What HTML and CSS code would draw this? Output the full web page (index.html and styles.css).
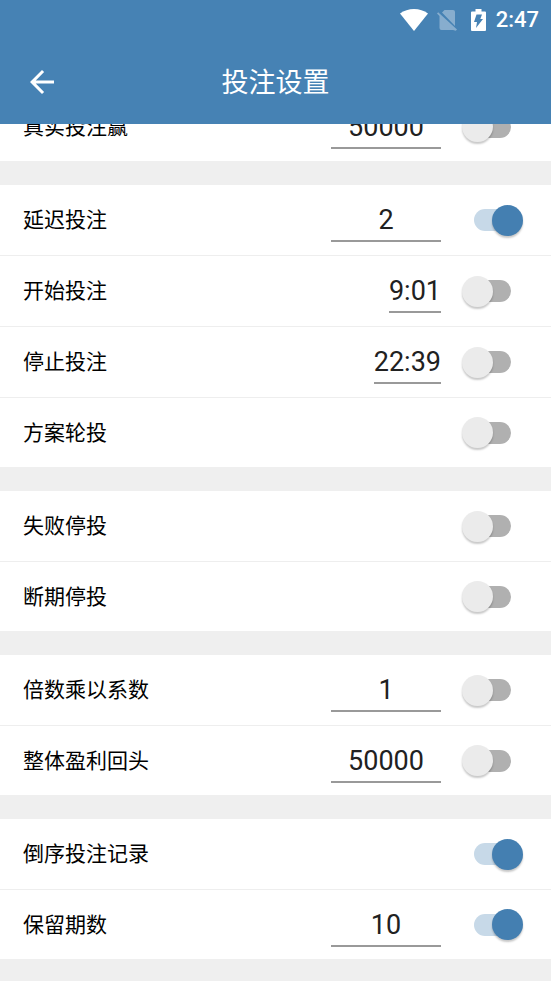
FILE: index.html
```html
<!DOCTYPE html>
<html lang="zh-CN">
<head>
<meta charset="utf-8">
<meta name="viewport" content="width=device-width, initial-scale=1">
<title>投注设置</title>
<link rel="stylesheet" href="styles.css">
</head>
<body>
<header class="header">
  <div class="status">
    <svg class="wifi" viewBox="0 0 28 22" aria-hidden="true"><path d="M14 22 0 4.6C4 1.6 8.800 0 14 0s10 1.600 14 4.600z" fill="#fff"/></svg>
    <svg class="sim" viewBox="0 0 20 22" aria-hidden="true"><path d="M7.500 1H16q2 0 2 2v14L5 3.500zM2.500 4.500 1.200 3.200 0 4.400 2.500 7v12q0 2 2 2H16l2.800.8 1.200-1.200z" fill="#fff"/></svg>
    <svg class="battery" viewBox="0 0 15 22" aria-hidden="true"><path fill="#fff" fill-rule="evenodd" d="M4.500 0h6v2.500H14q1 0 1 1V21q0 1-1 1H1q-1 0-1-1V3.500q0-1 1-1h3.500zM5.500 5.500h5.500L9.300 10h2.700L5 19l1-6H3z"/></svg>
    <span class="clock">2:47</span>
  </div>
  <div class="toolbar">
    <button class="back" type="button" aria-label="返回">
      <svg viewBox="0 0 24 24" aria-hidden="true"><path fill="#fff" d="M20 11H7.830l5.590-5.590L12 4l-8 8 8 8 1.410-1.410L7.830 13H20z"/></svg>
    </button>
    <h1 class="title">投注设置</h1>
  </div>
</header>
<main class="settings">
  <section class="group">
    <div class="row"><label class="label" for="win">真实投注赢</label><input class="field" type="text" value="50000" aria-label="真实投注赢数值"><input class="switch" type="checkbox" id="win"></div>
  </section>
  <section class="group">
    <div class="row"><label class="label" for="delay">延迟投注</label><input class="field" type="text" value="2" aria-label="延迟投注数值"><input class="switch" type="checkbox" id="delay" checked></div>
    <div class="row"><label class="label" for="start">开始投注</label><button class="field time" type="button">9:01</button><input class="switch" type="checkbox" id="start"></div>
    <div class="row"><label class="label" for="stop">停止投注</label><button class="field time" type="button">22:39</button><input class="switch" type="checkbox" id="stop"></div>
    <div class="row"><label class="label" for="rotate">方案轮投</label><input class="switch" type="checkbox" id="rotate"></div>
  </section>
  <section class="group">
    <div class="row"><label class="label" for="fail">失败停投</label><input class="switch" type="checkbox" id="fail"></div>
    <div class="row"><label class="label" for="break">断期停投</label><input class="switch" type="checkbox" id="break"></div>
  </section>
  <section class="group">
    <div class="row"><label class="label" for="factor">倍数乘以系数</label><input class="field" type="text" value="1" aria-label="系数"><input class="switch" type="checkbox" id="factor"></div>
    <div class="row"><label class="label" for="profit">整体盈利回头</label><input class="field" type="text" value="50000" aria-label="整体盈利数值"><input class="switch" type="checkbox" id="profit"></div>
  </section>
  <section class="group">
    <div class="row"><label class="label" for="reverse">倒序投注记录</label><input class="switch" type="checkbox" id="reverse" checked></div>
    <div class="row"><label class="label" for="keep">保留期数</label><input class="field" type="text" value="10" aria-label="期数"><input class="switch" type="checkbox" id="keep" checked></div>
  </section>
</main>
</body>
</html>
```
FILE: styles.css
```css
* {
  box-sizing: border-box;
}

body {
  margin: 0;
  background: #efefef;
  color: #000;
  font-family: Roboto, "Noto Sans CJK SC", sans-serif;
}

.header {
  position: sticky;
  top: 0;
  z-index: 1;
  background: #4682b4;
  color: #fff;
}

.status {
  display: flex;
  justify-content: flex-end;
  align-items: center;
  height: 39px;
  padding-right: 12px;
}

.status svg {
  height: 22px;
}

.wifi {
  width: 28px;
  margin-right: 9px;
}

.sim {
  width: 20px;
  margin-right: 14px;
  opacity: 0.35;
}

.battery {
  width: 15px;
  margin-right: 10px;
}

.clock {
  font-size: 22px;
  font-weight: 500;
  line-height: 24px;
}

.toolbar {
  display: grid;
  grid-template-columns: 1fr auto 1fr;
  align-items: center;
  height: 85px;
  padding: 0 24px;
}

.back {
  width: 36px;
  height: 36px;
  padding: 0;
  border: 0;
  background: none;
}

.back svg {
  display: block;
}

.title {
  margin: 0;
  padding-top: 3px;
  font-size: 27px;
  font-weight: 400;
  line-height: 40px;
}

/* The list is scrolled partly under the header. */
.settings {
  display: flex;
  flex-direction: column;
  gap: 24px;
  margin-top: -32px;
  padding-bottom: 22px;
}

.group {
  background: #fff;
}

.row {
  display: flex;
  align-items: center;
  height: 71px;
  padding: 0 28px 0 23px;
  border-bottom: 1px solid #eee;
}

.row:last-child {
  height: 69px;
  border-bottom: 0;
}

.label {
  flex: 1;
  font-size: 21px;
  line-height: 32px;
}

.field {
  width: 110px;
  height: 44px;
  margin: 0 21px 0 0;
  padding: 2px 0 0;
  border: 0;
  border-bottom: 2px solid #999;
  border-radius: 0;
  background: none;
  color: #212121;
  font-family: inherit;
  font-size: 27px;
  text-align: center;
}

.time {
  width: auto;
}

.switch {
  appearance: none;
  display: grid;
  align-items: center;
  width: 61px;
  height: 31px;
  margin: 0;
}

.switch::before,
.switch::after {
  content: "";
  grid-area: 1 / 1;
}

.switch::before {
  justify-self: center;
  width: 37px;
  height: 22px;
  border-radius: 11px;
  background: #b0b0b0;
}

.switch::after {
  width: 31px;
  height: 31px;
  border-radius: 50%;
  background: #ebebeb;
  box-shadow: 0 2px 2px rgba(0, 0, 0, 0.22);
}

.switch:checked::before {
  background: #c7d9e8;
}

.switch:checked::after {
  justify-self: end;
  background: #447fb1;
}
```
